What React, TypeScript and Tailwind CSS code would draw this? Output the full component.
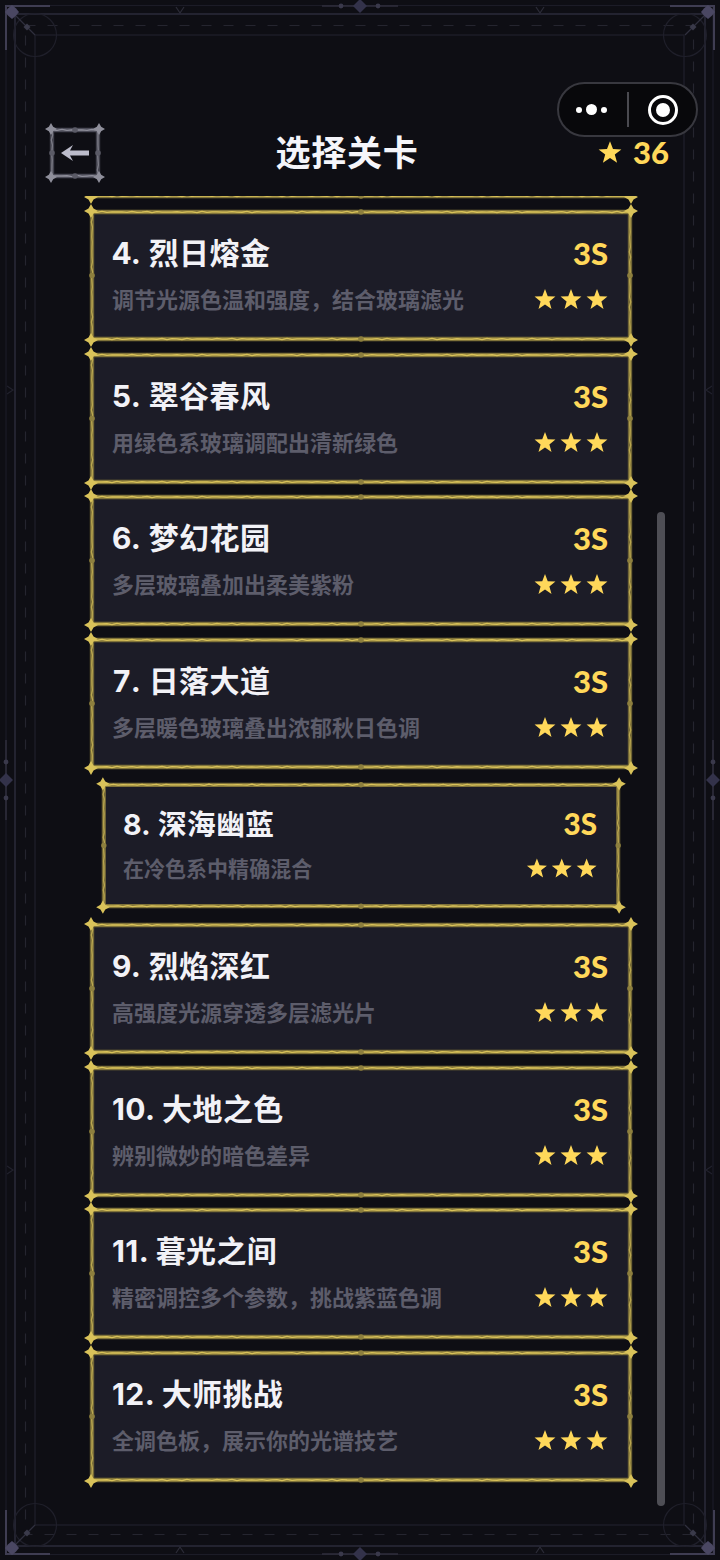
import React from "react";

const FONT = "font-['Inter','Noto_Sans_CJK_SC',sans-serif]";
const NUM = "font-['Lato','Noto_Sans_CJK_SC',sans-serif] font-black";

function wave(x1: number, y1: number, x2: number, y2: number, amp: number, seed: number) {
  const horizontal = y1 === y2;
  const len = horizontal ? x2 - x1 : y2 - y1;
  let d = `M${x1} ${y1}`;
  for (let t = 5; t <= len; t += 5) {
    const o = amp * Math.sin(t * 0.5 + seed) * Math.cos(t * 0.06 + seed);
    d += horizontal ? ` L${x1 + t} ${(y1 + o).toFixed(2)}` : ` L${(x1 + o).toFixed(2)} ${y1 + t}`;
  }
  return d;
}

function Diamond({ x, y, r, fill, sharp = 0.36 }: { x: number; y: number; r: number; fill: string; sharp?: number }) {
  const s = r * sharp;
  return (
    <path
      d={`M${x} ${y - r} L${x + s} ${y - s} L${x + r} ${y} L${x + s} ${y + s} L${x} ${y + r} L${x - s} ${y + s} L${x - r} ${y} L${x - s} ${y - s} Z`}
      fill={fill}
    />
  );
}

function OrnateFrame({ w, h, inset, bottom, base, light, dot, corner }: { w: number; h: number; inset: number; bottom: number; base: string; light: string; dot: string; corner: number }) {
  const l = inset, t = inset, r = w - inset, b = h - bottom;
  const sides = [
    [l, t, r, t, 1],
    [l, b, r, b, 1],
    [l, t, l, b, 0.85],
    [r, t, r, b, 0.85],
  ];
  return (
    <svg className="absolute inset-0 overflow-visible pointer-events-none" width={w} height={h} viewBox={`0 0 ${w} ${h}`} fill="none">
      {sides.map((s, i) => (
        <g key={i} opacity={s[4]}>
          <line x1={s[0]} y1={s[1]} x2={s[2]} y2={s[3]} stroke={base} strokeWidth={4.4} />
          <path d={wave(s[0], s[1], s[2], s[3], 0.7, i * 1.3)} stroke={light} strokeWidth={1.3} />
          <path d={wave(s[0], s[1], s[2], s[3], 0.7, i * 1.3 + 3.1)} stroke={light} strokeWidth={0.7} opacity={0.6} />
        </g>
      ))}
      <circle cx={w / 2} cy={t} r={2.8} fill={dot} />
      <circle cx={w / 2} cy={b} r={2.8} fill={dot} />
      <circle cx={l} cy={(t + b) / 2} r={2.8} fill={dot} />
      <circle cx={r} cy={(t + b) / 2} r={2.8} fill={dot} />
      <Diamond x={l - 1} y={t - 1} r={corner} fill={light} />
      <Diamond x={r + 1} y={t - 1} r={corner} fill={light} />
      <Diamond x={l - 1} y={b + 1} r={corner} fill={light} />
      <Diamond x={r + 1} y={b + 1} r={corner} fill={light} />
    </svg>
  );
}

function PageFrame() {
  const c = "#2b2b3a";
  const bright = "#3f3d52";
  const corners: [number, number, number][] = [
    [0, 0, 0],
    [720, 0, 90],
    [720, 1560, 180],
    [0, 1560, 270],
  ];
  return (
    <svg className="absolute inset-0 pointer-events-none" width={720} height={1560} viewBox="0 0 720 1560" fill="none">
      <rect x={15} y={14} width={690} height={1532} stroke={c} strokeWidth={1.5} />
      <rect x={35} y={35} width={649} height={1490} stroke="#20202c" strokeWidth={1.2} />
      <rect x={25.5} y={25.5} width={668} height={1509} stroke="#25252f" strokeWidth={1.2} strokeDasharray="10 12" />
      <rect x={6} y={5.5} width={707} height={1549} stroke="#1c1c27" strokeWidth={1.2} />
      {corners.map(([x, y, rot]) => (
        <g key={rot} transform={`translate(${x} ${y}) rotate(${rot})`}>
          <path d="M6 50 V6 H50" stroke={bright} strokeWidth={2} />
          <circle cx={35} cy={35} r={21.5} stroke="#1f1f2a" strokeWidth={1.2} />
          <line x1={12} y1={12} x2={35} y2={35} stroke="#2f2f3d" strokeWidth={1.2} />
          <Diamond x={12} y={12} r={7} fill="#4a4762" sharp={0.55} />
          <Diamond x={27} y={27} r={3.5} fill="#3a3a4a" sharp={0.5} />
        </g>
      ))}
      {[6, 1554].map((y) => (
        <g key={y}>
          <line x1={322} y1={y} x2={398} y2={y} stroke="#2f2e3d" strokeWidth={1.5} />
          <Diamond x={360} y={y} r={7} fill="#33324a" sharp={0.5} />
          <circle cx={341} cy={y} r={2.4} fill="#3a394b" />
          <circle cx={378} cy={y} r={2.4} fill="#3a394b" />
          <path d={y === 6 ? "M176 7 L180 13 L184 7" : "M176 1553 L180 1547 L184 1553"} stroke="#2c2c38" strokeWidth={1.2} />
          <path d={y === 6 ? "M536 7 L540 13 L544 7" : "M536 1553 L540 1547 L544 1553"} stroke="#2c2c38" strokeWidth={1.2} />
        </g>
      ))}
      {[6, 713].map((x) => (
        <g key={x}>
          <line x1={x} y1={740} x2={x} y2={820} stroke="#2f2e3d" strokeWidth={1.5} />
          <Diamond x={x} y={780} r={7} fill="#33324a" sharp={0.5} />
          <circle cx={x} cy={762} r={2.4} fill="#3a394b" />
          <circle cx={x} cy={798} r={2.4} fill="#3a394b" />
          <path d={x === 6 ? `M7 386 L13 390 L7 394` : `M712 386 L706 390 L712 394`} stroke="#22222d" strokeWidth={1.2} />
          <path d={x === 6 ? `M7 1166 L13 1170 L7 1174` : `M712 1166 L706 1170 L712 1174`} stroke="#22222d" strokeWidth={1.2} />
        </g>
      ))}
    </svg>
  );
}

function Star({ size }: { size: number }) {
  return (
    <svg width={size} height={size} viewBox="0 0 24 24">
      <path d="M12 1.2 L15 9 L23.4 9.4 L16.8 14.6 L19.1 22.8 L12 18.1 L4.9 22.8 L7.2 14.6 L.6 9.4 L9 9 Z" fill="#ffd85a" />
    </svg>
  );
}

function Card({ title, desc, small, tabular }: { title?: string; desc?: string; small?: boolean; tabular?: boolean }) {
  return (
    <div className={`relative w-[544px] h-[133px] shrink-0 p-[3px] ${small ? "scale-[0.956]" : ""}`}>
      <div className="h-full bg-[#1c1c27] pl-[20px] pr-[22px] pt-[19px] flex flex-col">
        {title && (
          <>
            <div className="flex items-center justify-between h-[44px]">
              <span className={`text-[30px] leading-[44px] font-bold tracking-[0.4px] text-[#f2f2f7] ${tabular ? "tabular-nums" : ""}`}>{title}</span>
              <span className={`text-[31px] leading-[44px] text-[#ffd85a] ${NUM}`}>3S</span>
            </div>
            <div className="flex items-center justify-between h-[44px] mt-[3px]">
              <span className="text-[22px] leading-[44px] font-bold text-[#5d5d6b]">{desc}</span>
              <span className="flex gap-[4px] mb-[2px]">
                <Star size={22} />
                <Star size={22} />
                <Star size={22} />
              </span>
            </div>
          </>
        )}
      </div>
      <OrnateFrame w={544} h={133} inset={3} bottom={3} base="#80733a" light="#d9c25a" dot="#8d7f3e" corner={7} />
    </div>
  );
}

const levels = [
  ["4. 烈日熔金", "调节光源色温和强度，结合玻璃滤光"],
  ["5. 翠谷春风", "用绿色系玻璃调配出清新绿色"],
  ["6. 梦幻花园", "多层玻璃叠加出柔美紫粉"],
  ["7. 日落大道", "多层暖色玻璃叠出浓郁秋日色调"],
  ["8. 深海幽蓝", "在冷色系中精确混合"],
  ["9. 烈焰深红", "高强度光源穿透多层滤光片"],
  ["10. 大地之色", "辨别微妙的暗色差异"],
  ["11. 暮光之间", "精密调控多个参数，挑战紫蓝色调"],
  ["12. 大师挑战", "全调色板，展示你的光谱技艺"],
];

export default function App() {
  return (
    <div className={`relative w-[720px] h-[1560px] overflow-hidden bg-[#0e0e14] ${FONT}`}>
      <PageFrame />

      <div className="relative flex flex-col h-full">
        <header className="h-[196px] shrink-0 pt-[124px] pl-[46px] pr-[50px] flex items-start">
          <div className="relative w-[58px] h-[58px] shrink-0 flex items-center justify-center">
            <OrnateFrame w={58} h={58} inset={6} bottom={6} base="#4a4a56" light="#8f8f9b" dot="#5a5a66" corner={6} />
            <svg width={30} height={18} viewBox="0 0 30 18" fill="#bcbccb">
              <path d="M1 9 L13 1 L10 6.5 H29 V11.5 H10 L13 17 Z" />
            </svg>
          </div>
          <h1 className="flex-1 text-center text-[35px] leading-[58px] font-bold tracking-[0.8px] text-[#f5f5fa]">选择关卡</h1>
          <div className="w-[80px] shrink-0 flex items-center justify-end gap-[11px] h-[56px]">
            <Star size={24} />
            <span className={`text-[31px] leading-[56px] text-[#ffd85a] pr-[1px] ${NUM}`}>36</span>
          </div>
        </header>

        <div className="flex-1 overflow-hidden pl-[89px]">
          <div className="flex flex-col gap-[9.6px] mt-[-129.6px]">
            <Card />
            {levels.map(([t, d], i) => (
              <Card key={t} title={t} desc={d} small={i === 4} tabular={i < 6} />
            ))}
          </div>
        </div>
      </div>

      <div className="absolute left-[657px] top-[512px] w-[8px] h-[994px] rounded-full bg-[#4e4e55]" />

      <div className="absolute left-[557px] top-[82px] w-[141px] h-[55px] rounded-full bg-[#08080b] border-2 border-[#38383f] flex items-center">
        <div className="w-[68px] flex items-center justify-center gap-[4px] pr-[3px]">
          <span className="w-[6px] h-[6px] rounded-full bg-white" />
          <span className="w-[11px] h-[11px] rounded-full bg-white" />
          <span className="w-[6px] h-[6px] rounded-full bg-white" />
        </div>
        <div className="w-[1.5px] h-[35px] bg-[#4a4a50]" />
        <div className="flex-1 flex items-center justify-center pl-[2px]">
          <div className="w-[30px] h-[30px] rounded-full border-[3px] border-white flex items-center justify-center">
            <span className="w-[14px] h-[14px] rounded-full bg-white" />
          </div>
        </div>
      </div>
    </div>
  );
}
